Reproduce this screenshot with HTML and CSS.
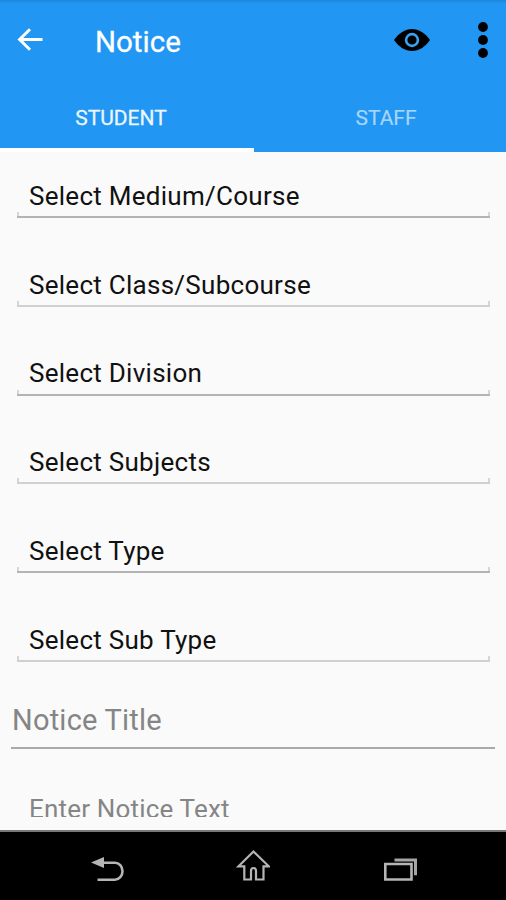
FILE: index.html
```html
<!DOCTYPE html>
<html lang="en">
<head>
<meta charset="utf-8">
<title>Notice</title>
<link rel="stylesheet" href="styles.css">
</head>
<body>
<div class="screen">
  <header class="header">
    <div class="appbar">
      <svg class="back" viewBox="0 0 26 26" aria-hidden="true"><path d="M13 2.200 2.600 12.500 13 22.800M2.600 12.500H25.500"/></svg>
      <h1 class="title"><span>Notice</span></h1>
      <svg class="eye" viewBox="0 0 36 22" aria-hidden="true"><path class="lid" d="M0 11C5 4 11 0 18 0s13 4 18 11c-5 7-11 11-18 11S5 18 0 11Z"/><circle class="ring" cx="18" cy="11" r="5.900"/></svg>
      <svg class="more" viewBox="0 0 10 36" aria-hidden="true"><circle cx="5" cy="5" r="4.900"/><circle cx="5" cy="18" r="4.900"/><circle cx="5" cy="31" r="4.900"/></svg>
    </div>
    <nav class="tabs">
      <div class="tab active"><span>STUDENT</span></div>
      <div class="tab"><span>STAFF</span></div>
    </nav>
  </header>
  <main class="form">
    <div class="select crisp"><span>Select Medium/Course</span></div>
    <div class="select"><span>Select Class/Subcourse</span></div>
    <div class="select crisp"><span>Select Division</span></div>
    <div class="select"><span>Select Subjects</span></div>
    <div class="select crisp"><span>Select Type</span></div>
    <div class="select"><span>Select Sub Type</span></div>
    <div class="input"><span>Notice Title</span></div>
    <div class="textarea"><span>Enter Notice Text</span></div>
  </main>
  <footer class="navbar">
    <svg class="nav-back" viewBox="0 0 34 26" aria-hidden="true"><path class="head" d="M0 6.500 13 1v11Z"/><path class="line" d="M12 6.700H24a7.500 8.500 0 0 1 0 17H6.500"/></svg>
    <svg class="nav-home" viewBox="0 0 34 34" aria-hidden="true"><path class="home" d="M17.500 2.500 2.500 17.300H8.300V30.500H15V22a2.500 3 0 0 1 5 0V30.500H27.500V17.300H32.800Z"/></svg>
    <svg class="nav-recent" viewBox="0 0 34 24" aria-hidden="true"><path class="line" d="M1.300 7h26.200v15.500h-26.200Z"/><path class="back-card" d="M10.500 3h21v15.200"/></svg>
  </footer>
</div>
</body>
</html>
```
FILE: styles.css
```css
* { box-sizing: border-box; }
body { margin: 0; font-family: Roboto, "Liberation Sans", sans-serif; background: #fafafa; }
.screen { width: 506px; height: 900px; display: flex; flex-direction: column; overflow: hidden; }
svg { display: block; fill: none; flex: none; }

.header { height: 152px; flex: none; background: linear-gradient(#1d87d8, #2196f3 4px); color: #fff; }
.appbar { height: 84px; display: flex; align-items: flex-start; padding-left: 17px; }
.back { width: 26px; height: 26px; margin-top: 27px; stroke: #fff; stroke-width: 3; }
.title { margin: 24px 0 0 52px; width: 299px; font-size: 29.5px; line-height: 36px; font-weight: 400; -webkit-text-stroke: 0.3px #fff; }
.eye { width: 36px; height: 22px; margin-top: 29px; }
.lid { fill: #000; }
.ring { stroke: #3aa0f0; stroke-width: 2.6; }
.more { width: 10px; height: 36px; margin: 22px 0 0 48px; fill: #000; }
.tabs { height: 68px; display: flex; }
.tab { flex: 0 0 252px; display: flex; justify-content: center; padding: 22px 0 0 12px; font-size: 21px; line-height: 25px; color: #a6d5fa; -webkit-text-stroke: 0.2px #a6d5fa; }
.tab.active { flex-basis: 254px; padding: 22px 12px 0 0; color: #eaf5fe; border-bottom: 4px solid #fff; -webkit-text-stroke: 0.3px #eaf5fe; }

.form { height: 678px; flex: none; overflow: hidden; display: flex; flex-direction: column; }
.select { height: 66px; flex: none; margin: 0 16px 22.8px 17px; padding: 27.8px 0 0 12px; font-size: 26px; line-height: 32px; letter-spacing: 0.27px; color: #111; border-bottom: 2px solid #d0d0d0; position: relative; }
.select.crisp { border-bottom-color: #b4b4b4; }
.select::before, .select::after { content: ""; position: absolute; bottom: 0; width: 2px; height: 4px; background: #d6d6d6; }
.select::before { left: 0; }
.select::after { right: 0; }
.input { height: 64px; flex: none; margin: 0 11px; padding: 17px 0 0 1px; font-size: 29px; line-height: 36px; letter-spacing: 0.22px; color: #858585; border-bottom: 2px solid #aaa; }
.textarea { height: 68px; overflow: hidden; margin: 0 11px; padding: 44px 0 0 18px; font-size: 26px; line-height: 32px; letter-spacing: 0.18px; color: #858585; }

.navbar { height: 70px; flex: none; display: flex; align-items: flex-start; background: #000; border-top: 2px solid #777; }
.line { stroke: #b5b5b5; stroke-width: 2.6; }
.home { stroke: #b5b5b5; stroke-width: 2.2; }
.head { fill: #b5b5b5; }
.back-card { stroke: #a5a5a5; stroke-width: 3; }
.nav-back { width: 34px; height: 26px; margin: 24px 0 0 91px; }
.nav-home { width: 34px; height: 34px; margin: 17px 0 0 111px; }
.nav-recent { width: 34px; height: 24px; margin: 25px 0 0 114px; }
```
